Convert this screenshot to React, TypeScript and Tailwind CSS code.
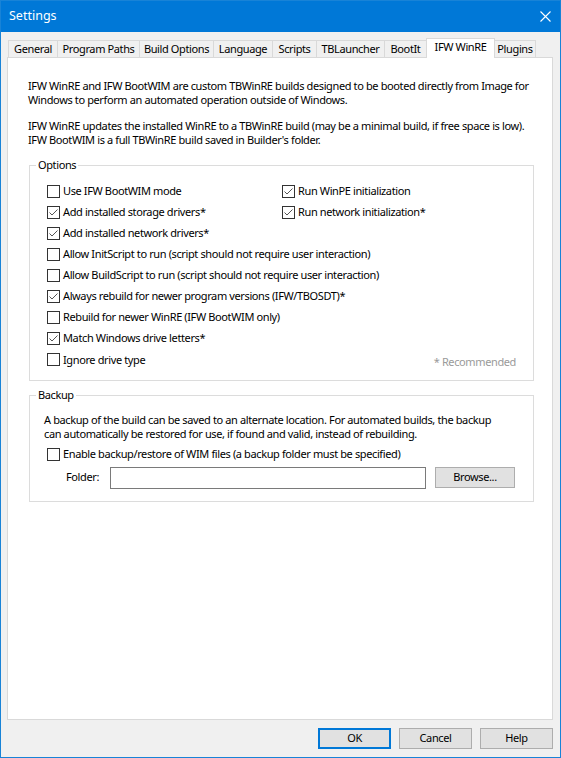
const font = { fontFamily: '"Noto Sans", "Open Sans", sans-serif' };

const tabs = [
  { label: "General", w: "w-[50px]" },
  { label: "Program Paths", w: "w-[83px]" },
  { label: "Build Options", w: "w-[75px]" },
  { label: "Language", w: "w-[60px]" },
  { label: "Scripts", w: "w-[45px]" },
  { label: "TBLauncher", w: "w-[69px]" },
  { label: "BootIt", w: "w-[43px]" },
  { label: "IFW WinRE", w: "w-[69px]", active: true },
  { label: "Plugins", w: "w-[42px]" },
];

const options = [
  { label: "Use IFW BootWIM mode", checked: false, right: { label: "Run WinPE initialization", checked: true } },
  { label: "Add installed storage drivers*", checked: true, right: { label: "Run network initialization*", checked: true } },
  { label: "Add installed network drivers*", checked: true },
  { label: "Allow InitScript to run (script should not require user interaction)", checked: false },
  { label: "Allow BuildScript to run (script should not require user interaction)", checked: false },
  { label: "Always rebuild for newer program versions (IFW/TBOSDT)*", checked: true },
  { label: "Rebuild for newer WinRE (IFW BootWIM only)", checked: false },
  { label: "Match Windows drive letters*", checked: true },
  { label: "Ignore drive type", checked: false },
];

function Box({ checked }: { checked: boolean }) {
  return (
    <span className="flex h-[13px] w-[13px] shrink-0 items-center justify-center border border-[#333333] bg-white">
      {checked && (
        <svg width="11" height="11" viewBox="0 0 11 11">
          <path d="M1.5 5.5 L4 8 L9.5 2.5" fill="none" stroke="#555555" strokeWidth="1" />
        </svg>
      )}
    </span>
  );
}

function Check({ label, checked }: { label: string; checked: boolean }) {
  return (
    <div className="flex h-[21px] items-center gap-[3px] whitespace-nowrap">
      <Box checked={checked} />
      <span>{label}</span>
    </div>
  );
}

function Group({ title, className, children }: { title: string; className?: string; children: React.ReactNode }) {
  return (
    <div className={`relative ml-[21px] w-[505px] border border-[#dcdcdc] ${className ?? ""}`}>
      <span className="absolute -top-[9px] left-[6px] bg-white px-[2px] leading-[16px]">{title}</span>
      {children}
    </div>
  );
}

function Button({ label, primary }: { label: string; primary?: boolean }) {
  return (
    <div
      className={`flex h-[21px] w-[73px] items-center justify-center bg-[#e1e1e1] ${
        primary ? "border-2 border-[#0078d7]" : "border border-[#adadad]"
      }`}
    >
      {label}
    </div>
  );
}

export default function App() {
  return (
    <div
      className="flex h-[758px] w-[561px] flex-col border border-[#1883d7] bg-[#f0f0f0] text-[11px] tracking-[-0.38px] text-black"
      style={font}
    >
      {/* title bar */}
      <div className="flex h-[31px] shrink-0 items-center justify-between bg-[#0078d7] pl-[8px] pr-[9px] text-white">
        <span className="text-[12.5px] tracking-normal">Settings</span>
        <svg width="11" height="11" viewBox="0 0 11 11">
          <path d="M0.5 0.5 L10.5 10.5 M10.5 0.5 L0.5 10.5" stroke="white" strokeWidth="1.1" />
        </svg>
      </div>

      <div className="ml-[6px] mt-[6px] flex flex-col">
        {/* tabs */}
        <div className="flex h-[19px] items-end pl-[1px]">
          {tabs.map((t, i) => (
            <div
              key={t.label}
              className={`flex items-center justify-center whitespace-nowrap border border-b-0 border-[#d9d9d9] ${t.w} ${
                i > 0 ? "-ml-px" : ""
              } ${
                t.active
                  ? "relative z-10 -mb-px h-[20px] bg-white pb-[3px]"
                  : "h-[17px] bg-[#f0f0f0]"
              }`}
            >
              {t.label}
            </div>
          ))}
        </div>

        {/* panel */}
        <div className="flex h-[663px] w-[546px] flex-col border border-[#d9d9d9] bg-white">
          <div className="pl-[20px] pt-[21px] leading-[14px] whitespace-nowrap">
            <p>
              IFW WinRE and IFW BootWIM are custom TBWinRE builds designed to be booted directly from Image for
              <br />
              Windows to perform an automated operation outside of Windows.
            </p>
            <p className="mt-[12px]">
              IFW WinRE updates the installed WinRE to a TBWinRE build (may be a minimal build, if free space is low).
              <br />
              IFW BootWIM is a full TBWinRE build saved in Builder's folder.
            </p>
          </div>

          <Group title="Options" className="mt-[18px] pb-[9px] pl-[17px] pt-[15px]">
            {options.map((o, i) => (
              <div key={o.label} className="flex items-center">
                <div className={o.right ? "w-[235px]" : ""}>
                  <Check label={o.label} checked={o.checked} />
                </div>
                {o.right && <Check label={o.right.label} checked={o.right.checked} />}
                {i === options.length - 1 && (
                  <span className="ml-auto mr-[17px] mt-[5px] text-[#9a9a9a]">* Recommended</span>
                )}
              </div>
            ))}
          </Group>

          <Group title="Backup" className="mt-[14px] pb-[12px] pl-[14px] pt-[17px]">
            <p className="whitespace-nowrap leading-[14px]">
              A backup of the build can be saved to an alternate location. For automated builds, the backup
              <br />
              can automatically be restored for use, if found and valid, instead of rebuilding.
            </p>
            <div className="mt-[3px] pl-[3px]">
              <Check label="Enable backup/restore of WIM files (a backup folder must be specified)" checked={false} />
            </div>
            <div className="mt-[2px] flex items-center">
              <span className="ml-[22px] w-[44px]">Folder:</span>
              <div className="h-[22px] w-[316px] border border-[#7a7a7a] bg-white" />
              <div className="ml-[9px]">
                <div className="flex h-[21px] w-[80px] items-center justify-center border border-[#adadad] bg-[#e1e1e1]">
                  Browse...
                </div>
              </div>
            </div>
          </Group>
        </div>
      </div>

      {/* dialog buttons */}
      <div className="mt-[8px] flex justify-end gap-[8px] pr-[7px]">
        <Button label="OK" primary />
        <Button label="Cancel" />
        <Button label="Help" />
      </div>
    </div>
  );
}
